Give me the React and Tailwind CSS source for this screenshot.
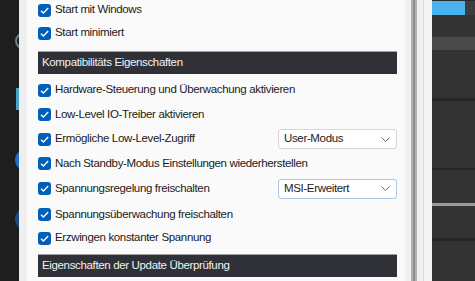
import React from 'react';

const font = { fontFamily: '"Liberation Sans", Arial, sans-serif' };

function CheckIcon() {
  return (
    <svg viewBox="0 0 13 13" className="h-[13px] w-[13px]">
      <path d="M3 6.8 L5.4 9.1 L10.2 4" fill="none" stroke="#ffffff" strokeWidth="1.4" />
    </svg>
  );
}

function CheckRow({ label, h, children }) {
  return (
    <div className={`flex items-center ${h}`}>
      <div className="flex h-[13px] w-[13px] shrink-0 items-center justify-center rounded-[3px] bg-[#005fb8]">
        <CheckIcon />
      </div>
      <span className="ml-[4px] flex-1 whitespace-nowrap text-[11.5px] tracking-[-0.35px] text-[#1b1b1b]">{label}</span>
      {children}
    </div>
  );
}

function Select({ value, focused }) {
  return (
    <div
      className={`flex h-[20px] w-[119px] items-center justify-between rounded-[3px] border bg-white pl-[5px] pr-[6px] text-[11.5px] tracking-[-0.35px] text-[#1b1b1b] ${
        focused ? 'border-[#a8c8e4]' : 'border-[#d4d4d4]'
      }`}
    >
      <span>{value}</span>
      <svg viewBox="0 0 9 5" className="h-[5px] w-[9px]">
        <path d="M0.5 0.5 L4.5 4.5 L8.5 0.5" fill="none" stroke="#6a6a6a" strokeWidth="1" />
      </svg>
    </div>
  );
}

function SectionHeader({ title, className = '' }) {
  return (
    <div className={`flex h-[23px] items-center border-t border-[#a0a0a0] bg-[#303136] pl-[4px] text-[11.5px] tracking-[-0.35px] text-[#f2f2f2] ${className}`}>
      {title}
    </div>
  );
}

export default function App() {
  return (
    <div className="flex h-[281px] w-[475px] overflow-hidden bg-[#fafafa]" style={font}>
      {/* Dark backdrop strip */}
      <div className="relative h-full w-[19px] shrink-0 overflow-hidden bg-[#1e1e1e]">
        <div className="absolute left-[15px] top-[33px] h-[16px] w-[16px] rounded-full border-2 border-[#6f7f8a]" />
        <div className="absolute left-[16px] top-[88px] h-[22px] w-[6px] bg-[#4aa3c6]" />
        <div className="absolute left-[15px] top-[149px] h-[22px] w-[22px] rounded-full bg-[#1f6dbd]" />
        <div className="absolute left-[15px] top-[208px] h-[22px] w-[22px] rounded-full bg-[#1b4a80]" />
      </div>
      <div className="h-full w-[8px] shrink-0 bg-[#efefef]" />

      {/* Settings panel */}
      <div className="flex w-[378px] shrink-0 flex-col pl-[11px] pr-[8px]">
        <CheckRow label="Start mit Windows" h="h-[20px]" />
        <CheckRow label="Start minimiert" h="mt-[2px] h-[22px]" />
        <SectionHeader title="Kompatibilitäts Eigenschaften" className="mt-[7px]" />
        <CheckRow label="Hardware-Steuerung und Überwachung aktivieren" h="mt-[4px] h-[24px]" />
        <CheckRow label="Low-Level IO-Treiber aktivieren" h="h-[25px]" />
        <CheckRow label="Ermögliche Low-Level-Zugriff" h="h-[24px]">
          <Select value="User-Modus" />
        </CheckRow>
        <CheckRow label="Nach Standby-Modus Einstellungen wiederherstellen" h="h-[25px]" />
        <CheckRow label="Spannungsregelung freischalten" h="h-[25px]">
          <Select value="MSI-Erweitert" focused />
        </CheckRow>
        <CheckRow label="Spannungsüberwachung freischalten" h="h-[27px]" />
        <CheckRow label="Erzwingen konstanter Spannung" h="h-[20px]" />
        <SectionHeader title="Eigenschaften der Update Überprüfung" className="mt-[6px]" />
      </div>

      {/* Scrollbar / window edge */}
      <div className="flex h-full w-[27px] shrink-0">
        <div className="w-[6px] bg-[#f0f0f0]" />
        <div className="flex w-[6px]">
          <div className="w-[2px] bg-[#b0b0b0]" />
          <div className="w-[2px] bg-[#8f8f8f]" />
          <div className="w-[2px] bg-[#b0b0b0]" />
        </div>
        <div className="w-[6px] bg-[#f0f0f0]" />
        <div className="w-[1px] bg-[#dcdcdc]" />
        <div className="w-[8px] bg-[#f4f4f4]" />
      </div>

      {/* Dark window behind */}
      <div className="flex h-full flex-1 flex-col bg-[#333333]">
        <div className="h-[1px] bg-[#2a2a2a]" />
        <div className="flex h-[14px]">
          <div className="w-[33px] bg-[#4cb1ef]" />
          <div className="flex-1 bg-[#3c3c3c]" />
        </div>
        <div className="h-[22px]" />
        <div className="h-[13px] bg-[#4a4a4a]" />
        <div className="h-[48px]" />
        <div className="h-[3px] bg-[#262626]" />
        <div className="h-[67px]" />
        <div className="h-[2px] bg-[#262626]" />
        <div className="h-[33px]" />
        <div className="h-[3px] bg-[#9c9c9c]" />
        <div className="h-[32px]" />
        <div className="h-[3px] bg-[#262626]" />
      </div>
    </div>
  );
}
